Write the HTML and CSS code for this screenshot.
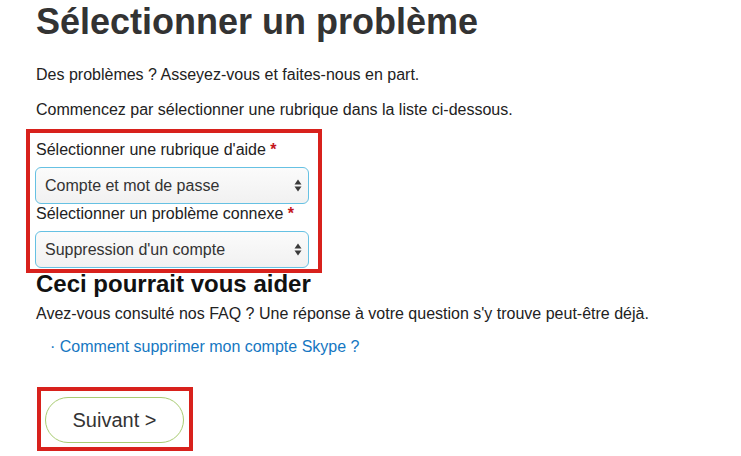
FILE: index.html
```html
<!DOCTYPE html>
<html>
  <head>
    <meta name="viewport" content="width=device-width,initial-scale=1.0">
    <title>Sélectionner un problème</title>
    <link rel="stylesheet" href="styles.css">
  </head>
  <body>
    <div id="page">
      <h1>Sélectionner un problème</h1>
      <p>Des problèmes ? Asseyez-vous et faites-nous en part.</p>
      <p class="intro">Commencez par sélectionner une rubrique dans la liste ci-dessous.</p>

      <div class="mark topics">
        <div class="field">
          <label for="topic">Sélectionner une rubrique d'aide <span class="req">*</span></label>
          <div class="select-wrap">
            <select id="topic">
              <option>Compte et mot de passe</option>
            </select>
            <svg class="arrows" width="8" height="13" viewBox="0 0 8 13"><polygon points="0.5,5.5 4,0.5 7.5,5.5" /><polygon points="0.5,7.5 4,12.5 7.5,7.5" /></svg>
          </div>
        </div>
        <div class="field">
          <label for="issue">Sélectionner un problème connexe <span class="req">*</span></label>
          <div class="select-wrap">
            <select id="issue">
              <option>Suppression d'un compte</option>
            </select>
            <svg class="arrows" width="8" height="13" viewBox="0 0 8 13"><polygon points="0.5,5.5 4,0.5 7.5,5.5" /><polygon points="0.5,7.5 4,12.5 7.5,7.5" /></svg>
          </div>
        </div>
      </div>

      <h2>Ceci pourrait vous aider</h2>
      <p class="faq">Avez-vous consulté nos FAQ ? Une réponse à votre question s'y trouve peut-être déjà.</p>
      <ul class="links">
        <li><a href="#">· Comment supprimer mon compte Skype ?</a></li>
      </ul>

      <div class="mark next">
        <button>Suivant &gt;</button>
      </div>
    </div>
  </body>
</html>
```

FILE: styles.css
```css
body { margin: 0; background: #fff; color: #333; font-family: "Liberation Sans", Arial, Helvetica, sans-serif; }
#page { padding-left: 36px; }

h1 { margin: 2px 0 0; font-size: 36px; line-height: 40px; font-weight: bold; color: #333; }
p { margin: 0; font-size: 16px; line-height: 19px; color: #222; }
h1 + p { margin-top: 23px; }
.intro { margin-top: 16px; }

.mark { border: 4px solid #d8211c; box-sizing: border-box; }
.topics { width: 296px; margin: 10px 0 0 -10px; padding: 7px 9px 1px 5px; }
.field { display: flex; flex-direction: column; gap: 8px; }
.field label { margin-left: 1px; font-size: 16px; line-height: 19px; color: #222; }
.req { color: #c4161c; font-weight: bold; }

.select-wrap { position: relative; }
.select-wrap select { -webkit-appearance: none; appearance: none; display: block; width: 274px; height: 37px; margin: 0; padding: 0 24px 0 9px; border: 1px solid #66c1e3; border-radius: 6px; background: linear-gradient(#fbfbfb, #f1f1f1); font-family: inherit; font-size: 16px; color: #333; outline: none; }
.arrows { position: absolute; right: 7px; top: 12px; fill: #3a3a3a; }

h2 { margin: -1px 0 0; font-size: 24px; line-height: 24px; font-weight: bold; color: #111; }
.faq { margin-top: 8px; }

.links { list-style: none; margin: 14px 0 0; padding: 0 0 0 14px; font-size: 16px; line-height: 19px; }
.links a { color: #1577c2; text-decoration: none; }

.next { display: inline-block; margin: 31px 0 0 1px; padding: 6px 5px 4px 4px; }
.next button { display: block; width: 139px; height: 46px; border: 1px solid #a9cc73; border-radius: 23px; background: #fff; font-family: inherit; font-size: 20px; color: #333; }
```
